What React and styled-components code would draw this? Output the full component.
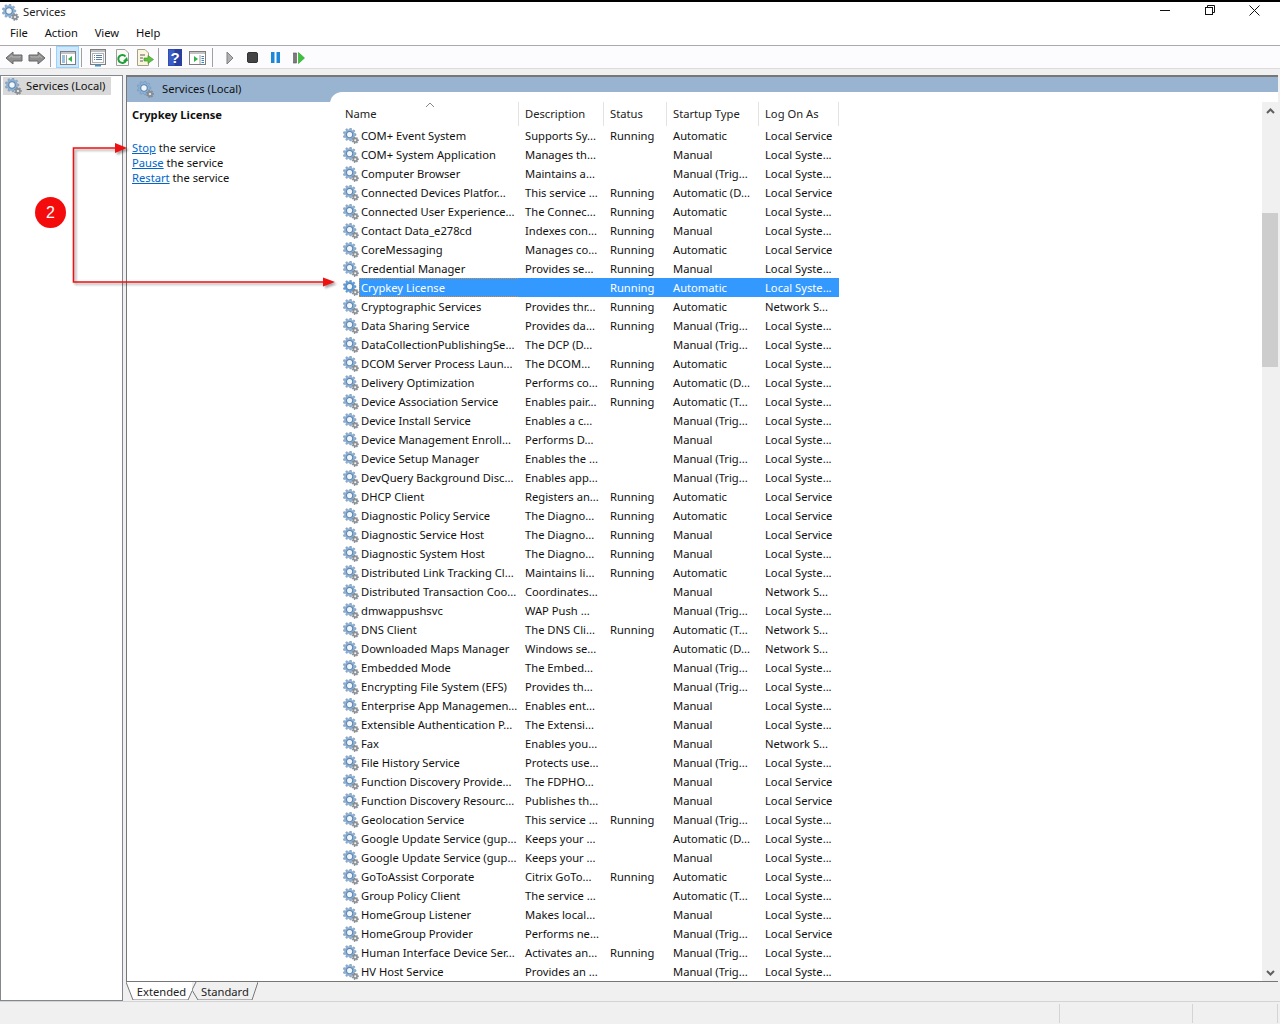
import React from 'react';
import styled, { createGlobalStyle } from 'styled-components';

const GlobalStyle = createGlobalStyle`
    html, body { margin: 0; padding: 0; background: #fff; }
    body { font-family: "Noto Sans", "Open Sans", sans-serif; font-size: 11.2px; color: #111; }
`;

const services = [
    ['COM+ Event System', 'Supports Sy...', 'Running', 'Automatic', 'Local Service'],
    ['COM+ System Application', 'Manages th...', '', 'Manual', 'Local Syste...'],
    ['Computer Browser', 'Maintains a...', '', 'Manual (Trig...', 'Local Syste...'],
    ['Connected Devices Platfor...', 'This service ...', 'Running', 'Automatic (D...', 'Local Service'],
    ['Connected User Experience...', 'The Connec...', 'Running', 'Automatic', 'Local Syste...'],
    ['Contact Data_e278cd', 'Indexes con...', 'Running', 'Manual', 'Local Syste...'],
    ['CoreMessaging', 'Manages co...', 'Running', 'Automatic', 'Local Service'],
    ['Credential Manager', 'Provides se...', 'Running', 'Manual', 'Local Syste...'],
    ['Crypkey License', '', 'Running', 'Automatic', 'Local Syste...'],
    ['Cryptographic Services', 'Provides thr...', 'Running', 'Automatic', 'Network S...'],
    ['Data Sharing Service', 'Provides da...', 'Running', 'Manual (Trig...', 'Local Syste...'],
    ['DataCollectionPublishingSe...', 'The DCP (D...', '', 'Manual (Trig...', 'Local Syste...'],
    ['DCOM Server Process Laun...', 'The DCOM...', 'Running', 'Automatic', 'Local Syste...'],
    ['Delivery Optimization', 'Performs co...', 'Running', 'Automatic (D...', 'Local Syste...'],
    ['Device Association Service', 'Enables pair...', 'Running', 'Automatic (T...', 'Local Syste...'],
    ['Device Install Service', 'Enables a c...', '', 'Manual (Trig...', 'Local Syste...'],
    ['Device Management Enroll...', 'Performs D...', '', 'Manual', 'Local Syste...'],
    ['Device Setup Manager', 'Enables the ...', '', 'Manual (Trig...', 'Local Syste...'],
    ['DevQuery Background Disc...', 'Enables app...', '', 'Manual (Trig...', 'Local Syste...'],
    ['DHCP Client', 'Registers an...', 'Running', 'Automatic', 'Local Service'],
    ['Diagnostic Policy Service', 'The Diagno...', 'Running', 'Automatic', 'Local Service'],
    ['Diagnostic Service Host', 'The Diagno...', 'Running', 'Manual', 'Local Service'],
    ['Diagnostic System Host', 'The Diagno...', 'Running', 'Manual', 'Local Syste...'],
    ['Distributed Link Tracking Cl...', 'Maintains li...', 'Running', 'Automatic', 'Local Syste...'],
    ['Distributed Transaction Coo...', 'Coordinates...', '', 'Manual', 'Network S...'],
    ['dmwappushsvc', 'WAP Push ...', '', 'Manual (Trig...', 'Local Syste...'],
    ['DNS Client', 'The DNS Cli...', 'Running', 'Automatic (T...', 'Network S...'],
    ['Downloaded Maps Manager', 'Windows se...', '', 'Automatic (D...', 'Network S...'],
    ['Embedded Mode', 'The Embed...', '', 'Manual (Trig...', 'Local Syste...'],
    ['Encrypting File System (EFS)', 'Provides th...', '', 'Manual (Trig...', 'Local Syste...'],
    ['Enterprise App Managemen...', 'Enables ent...', '', 'Manual', 'Local Syste...'],
    ['Extensible Authentication P...', 'The Extensi...', '', 'Manual', 'Local Syste...'],
    ['Fax', 'Enables you...', '', 'Manual', 'Network S...'],
    ['File History Service', 'Protects use...', '', 'Manual (Trig...', 'Local Syste...'],
    ['Function Discovery Provide...', 'The FDPHO...', '', 'Manual', 'Local Service'],
    ['Function Discovery Resourc...', 'Publishes th...', '', 'Manual', 'Local Service'],
    ['Geolocation Service', 'This service ...', 'Running', 'Manual (Trig...', 'Local Syste...'],
    ['Google Update Service (gup...', 'Keeps your ...', '', 'Automatic (D...', 'Local Syste...'],
    ['Google Update Service (gup...', 'Keeps your ...', '', 'Manual', 'Local Syste...'],
    ['GoToAssist Corporate', 'Citrix GoTo...', 'Running', 'Automatic', 'Local Syste...'],
    ['Group Policy Client', 'The service ...', '', 'Automatic (T...', 'Local Syste...'],
    ['HomeGroup Listener', 'Makes local...', '', 'Manual', 'Local Syste...'],
    ['HomeGroup Provider', 'Performs ne...', '', 'Manual (Trig...', 'Local Service'],
    ['Human Interface Device Ser...', 'Activates an...', 'Running', 'Manual (Trig...', 'Local Syste...'],
    ['HV Host Service', 'Provides an ...', '', 'Manual (Trig...', 'Local Syste...'],
];

const columns = '176px 85px 63px 92px 80px';

const Window = styled.div`
    position: relative;
    width: 1280px;
    height: 1024px;
    overflow: hidden;
    background: #f0f0f0;
    display: flex;
    flex-direction: column;
    border-top: 2px solid #000;
    box-sizing: border-box;
`;

const TitleBar = styled.div`
    height: 20px;
    background: #fff;
    display: flex;
    align-items: center;
    padding: 0 3px 0 2px;
`;

const TitleText = styled.span`
    flex: 1;
    margin-left: 4px;
    color: #222;
    padding-bottom: 2px;
`;

const CaptionBtn = styled.div`
    width: 45px;
    height: 16px;
    align-self: flex-start;
    display: flex;
    align-items: center;
    justify-content: center;
`;

const MenuBar = styled.div`
    height: 23px;
    box-sizing: content-box;
    background: #fff;
    display: flex;
    align-items: center;
    padding: 0 0 0 10px;
    gap: 16.8px;
    border-bottom: 1px solid #a9a9a9;
    color: #111;
`;

const MenuItem = styled.span`
    padding-bottom: 2px;
`;

const Toolbar = styled.div`
    height: 22px;
    padding-left: 2px;
    background: #fcfcff;
    display: flex;
    align-items: center;
    border-bottom: 1px solid #dcdcdc;
`;

const ToolBtn = styled.div`
    width: ${p => p.$w || 23}px;
    height: 22px;
    box-sizing: border-box;
    display: flex;
    align-items: center;
    justify-content: center;
    padding-top: 1px;
    ${p => p.$active && 'background: #cce8ff; border: 1px solid #99d1ff;'}
`;

const ToolSep = styled.div`
    width: 1px;
    height: 19px;
    background: #a0a0a0;
    margin: 0 ${p => p.$right ?? 4}px 0 ${p => p.$left ?? 2}px;
`;

const Workspace = styled.div`
    margin-top: 6px;
    height: 926px;
    flex-shrink: 0;
    display: flex;
    padding-right: 2px;
`;

const TreePanel = styled.div`
    width: 123px;
    box-sizing: border-box;
    border: 1px solid #828790;
    background: #fff;
    padding: 1px 0 0 2px;
    flex-shrink: 0;
`;

const TreeItem = styled.div`
    width: 108px;
    height: 18px;
    background: #d9d9d9;
    display: flex;
    align-items: center;
    gap: 4px;
    padding-left: 2px;
    box-sizing: border-box;
    white-space: nowrap;
`;

const PaneLabel = styled.span`
    padding-bottom: 2px;
`;

const MainColumn = styled.div`
    margin-left: 3px;
    flex: 1;
    min-width: 0;
    display: flex;
    flex-direction: column;
`;

const MainPanel = styled.div`
    height: 907px;
    flex-shrink: 0;
    box-sizing: border-box;
    border-left: 1px solid #777;
    border-top: 2px solid #777;
    border-bottom: 1px solid #777;
    background: #fff;
    display: flex;
    flex-direction: column;
    overflow: hidden;
`;

const Banner = styled.div`
    height: 25px;
    flex-shrink: 0;
    background: #99b4d1;
    display: flex;
    align-items: center;
    gap: 8px;
    padding-left: 10px;
    box-sizing: border-box;
    color: #111;
`;

const PaneRow = styled.div`
    flex: 1;
    min-height: 0;
    margin-top: -10px;
    display: flex;
`;

const DescPane = styled.div`
    width: 203px;
    flex-shrink: 0;
    margin-top: 10px;
    padding: 5px 0 0 5px;
    box-sizing: border-box;
    background: #fff;
`;

const ServiceTitle = styled.div`
    font-weight: 700;
    margin-bottom: 17px;
    line-height: 16px;
`;

const ActionLine = styled.div`
    line-height: 15px;
`;

const ActionLink = styled.a`
    color: #0066cc;
    text-decoration: underline;
`;

const ListPane = styled.div`
    flex: 1;
    min-width: 0;
    background: #fff;
    border-top-left-radius: 12px;
    display: flex;
`;

const ListArea = styled.div`
    flex: 1;
    min-width: 0;
    padding: 10px 0 0 13px;
    overflow: hidden;
`;

const HeaderRow = styled.div`
    position: relative;
    display: grid;
    grid-template-columns: ${columns};
    height: 24px;
`;

const HeaderCell = styled.div`
    padding: 0 0 1px ${p => p.$pad || 6}px;
    display: flex;
    align-items: center;
    border-right: 1px solid #e3e3e3;
    color: #222;
`;

const SortCaret = styled.svg`
    position: absolute;
    left: 82px;
    top: 0;
`;

const Row = styled.div`
    display: grid;
    grid-template-columns: ${columns};
    height: 19px;
    line-height: 19px;
    white-space: nowrap;
`;

const NameCell = styled.div`
    display: flex;
    align-items: center;
    min-width: 0;
`;

const focusDots = 'repeating-linear-gradient(90deg, #e08a2e 0 1px, transparent 1px 2px)';
const focusDotsV = 'repeating-linear-gradient(0deg, #e08a2e 0 1px, transparent 1px 2px)';

const NameText = styled.span`
    flex: 1;
    height: 19px;
    padding-left: 2px;
    ${p => p.$selected && `
        color: #fff;
        background:
            ${focusDots} top / 100% 1px no-repeat,
            ${focusDots} bottom / 100% 1px no-repeat,
            ${focusDotsV} left / 1px 100% no-repeat,
            #3399ff;
    `}
`;

const Cell = styled.div`
    padding-left: 6px;
    ${p => p.$selected && 'background: #3399ff; color: #fff;'}
`;

const Scrollbar = styled.div`
    width: 16px;
    flex-shrink: 0;
    margin-top: 10px;
    background: #f0f0f0;
    display: flex;
    flex-direction: column;
    justify-content: space-between;
`;

const ScrollBtn = styled.div`
    height: 17px;
    display: flex;
    align-items: center;
    justify-content: center;
`;

const ScrollThumb = styled.div`
    height: 154px;
    margin-top: 94px;
    background: #cdcdcd;
`;

const ScrollTrack = styled.div`
    flex: 1;
`;

const TabStrip = styled.div`
    height: 18px;
    flex-shrink: 0;
    display: flex;
    background: #f0f0f0;
`;

const Tab = styled.div`
    position: relative;
    width: ${p => p.$w}px;
    height: 18px;
    box-sizing: border-box;
    padding-left: ${p => p.$pad || 0}px;
    display: flex;
    align-items: center;
    justify-content: center;
    color: #222;
`;

const TabShape = styled.svg`
    position: absolute;
    left: 0;
    top: 0;
`;

const TabLabel = styled.span`
    position: relative;
`;

const StatusBar = styled.div`
    flex: 1;
    border-top: 1px solid #d4d4d4;
    padding-top: 1px;
    display: flex;
    justify-content: flex-end;
`;

const StatusCell = styled.div`
    width: ${p => p.$w}px;
    box-sizing: border-box;
    border-left: 1px solid #d4d4d4;
    margin-top: 1px;
    margin-bottom: 1px;
`;

const Callout = styled.svg`
    position: absolute;
    left: 60px;
    top: 136px;
    overflow: visible;
`;

const Badge = styled.div`
    position: absolute;
    left: 35px;
    top: 195px;
    width: 31px;
    height: 31px;
    border-radius: 50%;
    background: #f40c0c;
    color: #fff;
    font: 16px/31px "Liberation Sans", Arial, sans-serif;
    text-align: center;
`;

// gear outline with n teeth, worked out from radii so it can be reused at two sizes
function gearPath(cx, cy, outer, inner, n) {
    let d = '';
    for (let i = 0; i < n; i++) {
        let a = (i / n) * Math.PI * 2;
        let w = Math.PI / n;
        let pts = [
            [inner, a - w * 0.62],
            [outer, a - w * 0.36],
            [outer, a + w * 0.36],
            [inner, a + w * 0.62],
        ];
        pts.forEach(([r, t], j) => {
            let x = (cx + r * Math.cos(t)).toFixed(2);
            let y = (cy + r * Math.sin(t)).toFixed(2);
            d += (i === 0 && j === 0 ? 'M' : 'L') + x + ' ' + y + ' ';
        });
    }
    return d + 'Z';
}

function GearIcon({ size = 17, selected }) {
    let main = selected ? '#5aa0e6' : '#8fb2d6';
    return (
        <svg width={size} height={size} viewBox="0 0 17 17" style={{ flexShrink: 0 }}>
            <path d={gearPath(7, 7, 6.9, 5.2, 9)} fill={main} stroke="#6a8cb0" strokeWidth="0.5" />
            <circle cx="7" cy="7" r="3.8" fill="#5f86ad" />
            <circle cx="7" cy="7" r="2.7" fill="#f2f7fc" />
            <path d={gearPath(13, 13, 3.6, 2.6, 7)} fill="#8d9399" stroke="#6c7278" strokeWidth="0.4" />
            <circle cx="13" cy="13" r="1.1" fill="#f4f4f4" />
        </svg>
    );
}

const BackIcon = ({ flip }) => (
    <svg width="18" height="14" viewBox="0 0 18 14" style={flip ? { transform: 'scaleX(-1)' } : null}>
        <path d="M1 7 L8 1 V4 H17 V10 H8 V13 Z" fill="#8f8f8f" stroke="#666" strokeWidth="1" strokeLinejoin="round" />
        <path d="M4 7 L7 4.5 V6 H15 V5" fill="none" stroke="#b5b5b5" strokeWidth="1" />
    </svg>
);

const PanelLeftIcon = () => (
    <svg width="16" height="16" viewBox="0 0 16 16">
        <rect x="0.5" y="1.5" width="15" height="13" fill="#fff" stroke="#7d7d7d" />
        <rect x="1" y="2" width="14" height="2" fill="#c4c4c4" />
        <path d="M2 6h3M2 8h3M2 10h3M2 12h3" stroke="#3d83c4" strokeWidth="1" />
        <path d="M6.5 5v9" stroke="#a0a0a0" />
        <path d="M12 6 V12 L8 9 Z" fill="#2eb344" />
    </svg>
);

const PropsIcon = () => (
    <svg width="16" height="18" viewBox="0 0 16 18">
        <rect x="0.5" y="0.5" width="15" height="15" fill="#f6f6f6" stroke="#7d7d7d" />
        <rect x="1" y="1" width="14" height="2" fill="#bfbfbf" />
        <rect x="2.5" y="4.5" width="11" height="9" fill="#fff" stroke="#b3b3b3" />
        <path d="M4 6.5h1M6 6.5h6M4 8.5h1M6 8.5h6M4 10.5h1M6 10.5h6" stroke="#5a7ea5" />
        <rect x="5" y="16" width="6" height="1.5" fill="#3399dd" />
    </svg>
);

const RefreshIcon = () => (
    <svg width="15" height="17" viewBox="0 0 15 17">
        <path d="M1.5 0.5 H10 L13.5 4 V16.5 H1.5 Z" fill="#fbfbf5" stroke="#9e9e9e" />
        <path d="M10.5 7.5 A4 4 0 1 0 11 11.5" fill="none" stroke="#1e9e3c" strokeWidth="2" />
        <path d="M8 12 L13 12 L12 8 Z" fill="#1e9e3c" />
    </svg>
);

const ExportIcon = () => (
    <svg width="17" height="17" viewBox="0 0 17 17">
        <path d="M0.5 0.5 H8 L11.5 4 V16.5 H0.5 Z" fill="#fbf6dc" stroke="#a3a08c" />
        <path d="M3 6h5M3 9h3M3 12h3" stroke="#55606a" />
        <path d="M7 9 H11 V6.5 L16.5 10.5 L11 14.5 V12 H7 Z" fill="#5cc13d" stroke="#3b8f26" strokeWidth="0.6" />
    </svg>
);

const HelpIcon = () => (
    <svg width="14" height="17" viewBox="0 0 14 17">
        <rect width="14" height="17" fill="#27409f" />
        <rect x="0.5" y="0.5" width="6" height="16" fill="#3a5cc4" />
        <text x="7" y="14" textAnchor="middle" fontFamily="Liberation Sans, sans-serif" fontWeight="700" fontSize="15" fill="#fff">?</text>
    </svg>
);

const ViewIcon = () => (
    <svg width="17" height="16" viewBox="0 0 17 16">
        <rect x="0.5" y="1.5" width="16" height="13" fill="#fff" stroke="#7d7d7d" />
        <rect x="1" y="2" width="15" height="2" fill="#c4c4c4" />
        <path d="M11 5v9" stroke="#a0a0a0" />
        <path d="M12.5 6.5h2.5M12.5 8.5h2.5M12.5 10.5h2.5M12.5 12.5h2.5" stroke="#3d83c4" />
        <path d="M5 6 L9 9 L5 12 Z" fill="#2eb344" />
    </svg>
);

const PlayIcon = () => (
    <svg width="8" height="14" viewBox="0 0 8 14">
        <path d="M1 1 L7 7 L1 13 Z" fill="#b0b0b0" stroke="#808080" />
    </svg>
);

const StopIcon = () => (
    <svg width="11" height="11" viewBox="0 0 11 11">
        <rect x="0.5" y="0.5" width="10" height="10" rx="1.5" fill="#444" stroke="#333" />
    </svg>
);

const PauseIcon = () => (
    <svg width="9" height="11" viewBox="0 0 9 11">
        <rect width="3.5" height="11" fill="#1e88d8" />
        <rect x="5.5" width="3.5" height="11" fill="#1e88d8" />
    </svg>
);

const ResumeIcon = () => (
    <svg width="12" height="12" viewBox="0 0 12 12">
        <rect x="0.5" y="1" width="3" height="10" fill="#7a7a7a" stroke="#555" strokeWidth="0.6" />
        <path d="M5.5 0.5 L11.5 6 L5.5 11.5 Z" fill="#3cc23c" stroke="#2a9a2a" strokeWidth="0.6" />
    </svg>
);

const Minimize = () => (
    <svg width="10" height="10" viewBox="0 0 10 10"><path d="M0 5.5h10" stroke="#111" /></svg>
);

const Restore = () => (
    <svg width="10" height="10" viewBox="0 0 10 10" fill="none" stroke="#111">
        <rect x="0.5" y="2.5" width="7" height="7" />
        <path d="M2.5 2.5V0.5H9.5V7.5H7.5" />
    </svg>
);

const Close = () => (
    <svg width="11" height="11" viewBox="0 0 11 11"><path d="M0.5 0.5l10 10M10.5 0.5l-10 10" stroke="#111" /></svg>
);

const Chevron = ({ down }) => (
    <svg width="9" height="6" viewBox="0 0 9 6">
        <path d={down ? 'M1 1 L4.5 4.5 L8 1' : 'M1 5 L4.5 1.5 L8 5'} fill="none" stroke="#606060" strokeWidth="2" />
    </svg>
);

function App() {
    return (
        <Window>
            <GlobalStyle />
            <TitleBar>
                <GearIcon />
                <TitleText>Services</TitleText>
                <CaptionBtn><Minimize /></CaptionBtn>
                <CaptionBtn><Restore /></CaptionBtn>
                <CaptionBtn><Close /></CaptionBtn>
            </TitleBar>
            <MenuBar>
                <MenuItem>File</MenuItem>
                <MenuItem>Action</MenuItem>
                <MenuItem>View</MenuItem>
                <MenuItem>Help</MenuItem>
            </MenuBar>
            <Toolbar>
                <ToolBtn><BackIcon /></ToolBtn>
                <ToolBtn><BackIcon flip /></ToolBtn>
                <ToolSep $right={5} />
                <ToolBtn $active><PanelLeftIcon /></ToolBtn>
                <ToolSep />
                <ToolBtn $w={24}><PropsIcon /></ToolBtn>
                <ToolBtn $w={24}><RefreshIcon /></ToolBtn>
                <ToolBtn $w={22}><ExportIcon /></ToolBtn>
                <ToolSep />
                <ToolBtn><HelpIcon /></ToolBtn>
                <ToolBtn><ViewIcon /></ToolBtn>
                <ToolSep $left={3} $right={6} />
                <ToolBtn $w={22}><PlayIcon /></ToolBtn>
                <ToolBtn><StopIcon /></ToolBtn>
                <ToolBtn><PauseIcon /></ToolBtn>
                <ToolBtn><ResumeIcon /></ToolBtn>
            </Toolbar>
            <Workspace>
                <TreePanel>
                    <TreeItem><GearIcon /><PaneLabel>Services (Local)</PaneLabel></TreeItem>
                </TreePanel>
                <MainColumn>
                    <MainPanel>
                        <Banner><GearIcon /><PaneLabel>Services (Local)</PaneLabel></Banner>
                        <PaneRow>
                            <DescPane>
                                <ServiceTitle>Crypkey License</ServiceTitle>
                                <ActionLine><ActionLink>Stop</ActionLink> the service</ActionLine>
                                <ActionLine><ActionLink>Pause</ActionLink> the service</ActionLine>
                                <ActionLine><ActionLink>Restart</ActionLink> the service</ActionLine>
                            </DescPane>
                            <ListPane>
                                <ListArea>
                                    <HeaderRow>
                                        <HeaderCell $pad={2}>Name</HeaderCell>
                                        <HeaderCell>Description</HeaderCell>
                                        <HeaderCell>Status</HeaderCell>
                                        <HeaderCell>Startup Type</HeaderCell>
                                        <HeaderCell>Log On As</HeaderCell>
                                        <SortCaret width="10" height="6" viewBox="0 0 10 6">
                                            <path d="M1 5 L5 1 L9 5" fill="none" stroke="#888" />
                                        </SortCaret>
                                    </HeaderRow>
                                    {services.map((s, i) => {
                                        let selected = s[0] === 'Crypkey License';
                                        return (
                                            <Row key={i}>
                                                <NameCell>
                                                    <GearIcon size={16} selected={selected} />
                                                    <NameText $selected={selected}>{s[0]}</NameText>
                                                </NameCell>
                                                <Cell $selected={selected}>{s[1]}</Cell>
                                                <Cell $selected={selected}>{s[2]}</Cell>
                                                <Cell $selected={selected}>{s[3]}</Cell>
                                                <Cell $selected={selected}>{s[4]}</Cell>
                                            </Row>
                                        );
                                    })}
                                </ListArea>
                                <Scrollbar>
                                    <ScrollBtn><Chevron /></ScrollBtn>
                                    <ScrollTrack><ScrollThumb /></ScrollTrack>
                                    <ScrollBtn><Chevron down /></ScrollBtn>
                                </Scrollbar>
                            </ListPane>
                        </PaneRow>
                    </MainPanel>
                    <TabStrip>
                        <Tab $w={66} $pad={5}>
                            <TabShape width="66" height="18" viewBox="0 0 66 18">
                                <path d="M0 0 L7 18 H62 L70 0 Z" fill="#fff" />
                                <path d="M0 0 L7 18 H62 L66 9" fill="none" stroke="#777" />
                            </TabShape>
                            <TabLabel>Extended</TabLabel>
                        </Tab>
                        <Tab $w={66}>
                            <TabShape width="66" height="18" viewBox="0 0 66 18">
                                <path d="M4 0 L0 8 L6 18 H60 L66 0" fill="#f0f0f0" stroke="#777" />
                            </TabShape>
                            <TabLabel>Standard</TabLabel>
                        </Tab>
                    </TabStrip>
                </MainColumn>
            </Workspace>
            <StatusBar>
                <StatusCell $w={133} />
                <StatusCell $w={85} />
                <StatusCell $w={3} />
            </StatusBar>
            <Callout width="280" height="150" viewBox="0 0 280 150">
                <g style={{ filter: 'drop-shadow(2px 2px 1px rgba(0,0,0,0.35))' }}>
                    <path d="M58 10 H13.5 V144 H266" fill="none" stroke="#ee1111" strokeWidth="1.6" />
                    <path d="M55 5 L67 10 L55 15 Z" fill="#ee1111" />
                    <path d="M263 139.5 L275 144 L263 148.5 Z" fill="#ee1111" />
                </g>
            </Callout>
            <Badge>2</Badge>
        </Window>
    );
}

export default App;
